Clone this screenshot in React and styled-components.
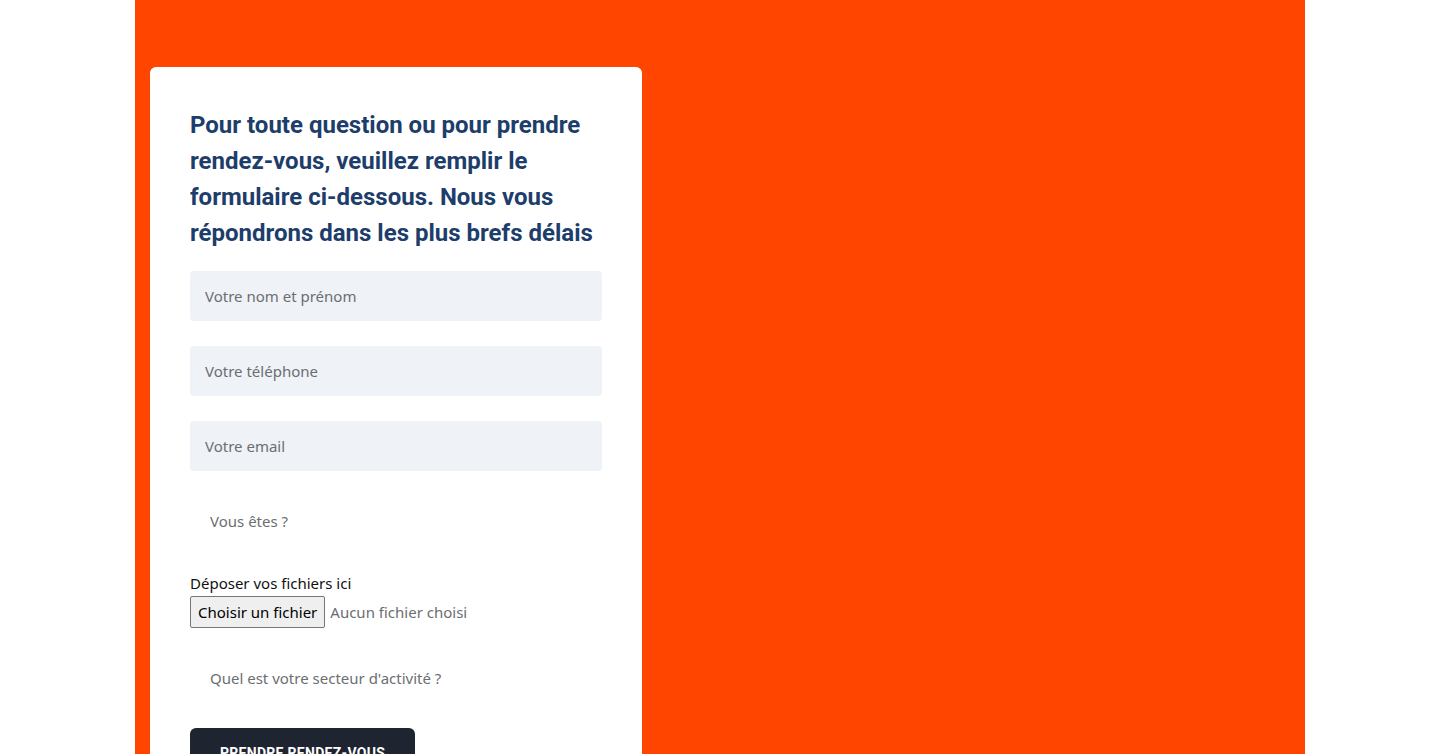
import React from "react";
import styled, { createGlobalStyle } from "styled-components";

const Global = createGlobalStyle`
  * { box-sizing: border-box; }
  html, body { margin: 0; padding: 0; background: #ffffff; }
  body { font-family: "Noto Sans", "Open Sans", sans-serif; }
`;

const Page = styled.div`
  display: flex;
  justify-content: center;
  min-height: 754px;
`;

const Banner = styled.section`
  width: 1170px;
  background: #ff4500;
  padding: 67px 15px 40px;
  display: flex;
`;

const Card = styled.div`
  width: 492px;
  background: #ffffff;
  border-radius: 6px;
  padding: 40px 40px 40px;
`;

const Heading = styled.h2`
  margin: 0 0 20px;
  font-family: Roboto, "Liberation Sans", sans-serif;
  font-weight: 700;
  font-size: 24px;
  line-height: 36px;
  color: #1d3d6b;
`;

const Form = styled.form`
  display: flex;
  flex-direction: column;
  gap: 25px;
`;

const TextInput = styled.input`
  width: 100%;
  height: 50px;
  border: none;
  border-radius: 4px;
  background: #eff2f6;
  padding: 0 15px;
  font-family: "Noto Sans", sans-serif;
  font-size: 15px;
  color: #333;
  outline: none;
  &::placeholder { color: #6b6e72; }
`;

const Select = styled.select`
  appearance: none;
  -webkit-appearance: none;
  width: 100%;
  height: 50px;
  border: none;
  background: transparent;
  padding: 0 20px;
  font-family: "Noto Sans", sans-serif;
  font-size: 15px;
  color: #6b6e72;
  outline: none;
`;

const FileGroup = styled.div`
  display: flex;
  flex-direction: column;
  gap: 1px;
`;

const FileLabel = styled.label`
  font-size: 15px;
  line-height: 24px;
  color: #111;
`;

const FileRow = styled.div`
  display: flex;
  align-items: center;
  gap: 5px;
`;

const FileButton = styled.button`
  height: 32px;
  padding: 0 7px;
  border: 1px solid #767676;
  border-radius: 2px;
  background: #efefef;
  font-family: "Noto Sans", sans-serif;
  font-size: 15px;
  color: #000;
`;

const FileStatus = styled.span`
  font-size: 15px;
  color: #6b6e72;
`;

const Submit = styled.button`
  align-self: flex-start;
  border: none;
  border-radius: 6px;
  background: #1e2530;
  color: #ffffff;
  padding: 15px 30px;
  font-family: Roboto, "Liberation Sans", sans-serif;
  font-weight: 700;
  font-size: 14px;
  line-height: 20px;
  letter-spacing: 0.3px;
  text-transform: uppercase;
`;

export default function App() {
  return (
    <>
      <Global />
      <Page>
        <Banner>
          <Card>
            <Heading>
              Pour toute question ou pour prendre rendez-vous, veuillez remplir le
              formulaire ci-dessous. Nous vous répondrons dans les plus brefs délais
            </Heading>
            <Form onSubmit={(e) => e.preventDefault()}>
              <TextInput placeholder="Votre nom et prénom" />
              <TextInput placeholder="Votre téléphone" />
              <TextInput placeholder="Votre email" />
              <Select defaultValue="">
                <option value="">Vous êtes ?</option>
              </Select>
              <FileGroup>
                <FileLabel>Déposer vos fichiers ici</FileLabel>
                <FileRow>
                  <FileButton type="button">Choisir un fichier</FileButton>
                  <FileStatus>Aucun fichier choisi</FileStatus>
                </FileRow>
              </FileGroup>
              <Select defaultValue="">
                <option value="">Quel est votre secteur d'activité ?</option>
              </Select>
              <Submit type="submit">Prendre rendez-vous</Submit>
            </Form>
          </Card>
        </Banner>
      </Page>
    </>
  );
}
